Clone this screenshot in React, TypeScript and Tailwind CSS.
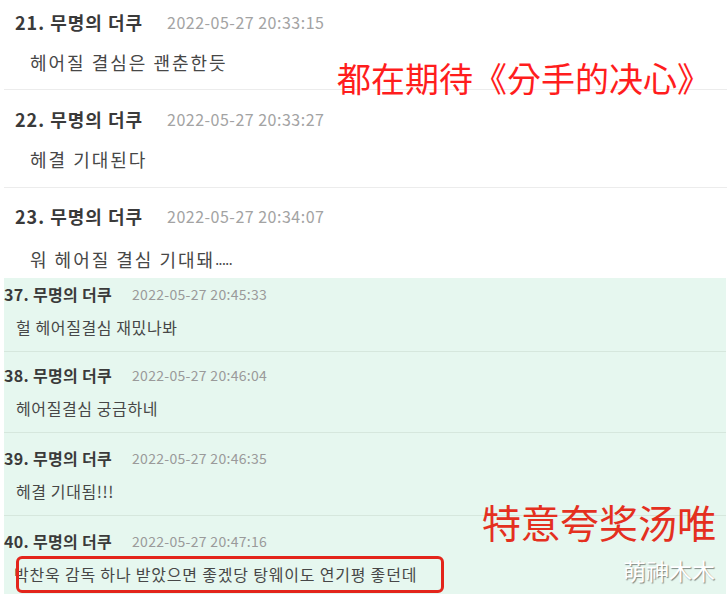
import React from "react";

const FONT = { fontFamily: '"Noto Sans CJK KR", "Noto Sans CJK SC", sans-serif' };

const topRows = [
  { no: 21, time: "2022-05-27 20:33:15", text: "헤어질 결심은 괜춘한듯", tail: "", pad: "pt-[10px] pb-[15px]" },
  { no: 22, time: "2022-05-27 20:33:27", text: "헤결 기대된다", tail: "", pad: "pt-[17px] pb-[16px]" },
  { no: 23, time: "2022-05-27 20:34:07", text: "워 헤어질 결심 기대돼", tail: ".....", pad: "pt-[16px] pb-[7px]" },
];

const greenRows = [
  { no: 37, time: "2022-05-27 20:45:33", text: "헐 헤어질결심 재밌나봐", pad: "pt-[6px]" },
  { no: 38, time: "2022-05-27 20:46:04", text: "헤어질결심 궁금하네", pad: "pt-[13px]" },
  { no: 39, time: "2022-05-27 20:46:35", text: "헤결 기대됨!!!", pad: "pt-[15px]" },
];

export default function App() {
  return (
    <div className="relative w-[727px] h-[595px] overflow-hidden bg-white" style={FONT}>
      {/* white list */}
      <div className="ml-[4px] flex flex-col">
        {topRows.map((r, i) => (
          <div
            key={r.no}
            className={`flex flex-col ${r.pad} ${i < 2 ? "border-b border-[#ececec]" : ""}`}
          >
            <div className="flex items-center h-[24px] pl-[11px]">
              <span className="text-[18px] font-bold text-[#3a3a3a] tracking-[1px] w-[152px]">
                {r.no}. 무명의 더쿠
              </span>
              <span className="text-[16px] text-[#a3a3a3] tracking-[0.5px]">{r.time}</span>
            </div>
            <div className={`flex items-center h-[24px] pl-[26px] ${i === 2 ? "mt-[19px]" : "mt-[16px]"}`}>
              <span className="text-[18px] text-[#474747] tracking-[2px]">{r.text}</span>
              {r.tail && (
                <span className="text-[14px] text-[#474747] tracking-[-0.5px] self-end pb-[1px]">{r.tail}</span>
              )}
            </div>
          </div>
        ))}
      </div>

      {/* green list */}
      <div className="ml-[4px] mr-[1px] bg-[#e6f7ef] flex flex-col h-[316px]">
        {greenRows.map((r) => (
          <div key={r.no} className={`flex flex-col ${r.pad} pb-[14px] border-b border-[#d6e7dd]`}>
            <div className="flex items-center h-[20px]">
              <span className="text-[16px] font-bold text-[#3a3a3a] tracking-[0.3px] w-[128px]">{r.no}. 무명의 더쿠</span>
              <span className="text-[14px] text-[#9a9a9a] tracking-[0.3px]">{r.time}</span>
            </div>
            <div className="flex items-center h-[20px] mt-[13px] pl-[12px]">
              <span className="text-[16px] text-[#474747] tracking-[0.6px]">{r.text}</span>
            </div>
          </div>
        ))}
        <div className="flex flex-col pt-[15px]">
          <div className="flex items-center h-[20px]">
            <span className="text-[16px] font-bold text-[#3a3a3a] tracking-[0.3px] w-[128px]">40. 무명의 더쿠</span>
            <span className="text-[14px] text-[#9a9a9a] tracking-[0.3px]">2022-05-27 20:47:16</span>
          </div>
          <div className="flex items-center h-[20px] mt-[13px] pl-[10px]">
            <span className="text-[16px] text-[#474747] tracking-[0.8px] whitespace-nowrap">
              박찬욱 감독 하나 받았으면 좋겠당 탕웨이도 연기평 좋던데
            </span>
          </div>
        </div>
      </div>

      {/* annotations */}
      <div className="absolute left-[16px] top-[556px] w-[428px] h-[37px] border-[3px] border-[#e3251b] rounded-[6px]" />
      <div className="absolute left-[337px] top-[56px] text-[34px] leading-[44px] text-[#ff1d1d] whitespace-nowrap">
        都在期待《分手的决心》
      </div>
      <div className="absolute left-[482px] top-[497px] text-[39px] leading-[48px] text-[#e4301f] whitespace-nowrap">
        特意夸奖汤唯
      </div>
      <div className="absolute left-[623px] top-[555px] text-[23px] leading-[30px] text-white whitespace-nowrap [text-shadow:1px_1px_1px_rgba(0,0,0,0.45)]">
        萌神木木
      </div>
    </div>
  );
}
